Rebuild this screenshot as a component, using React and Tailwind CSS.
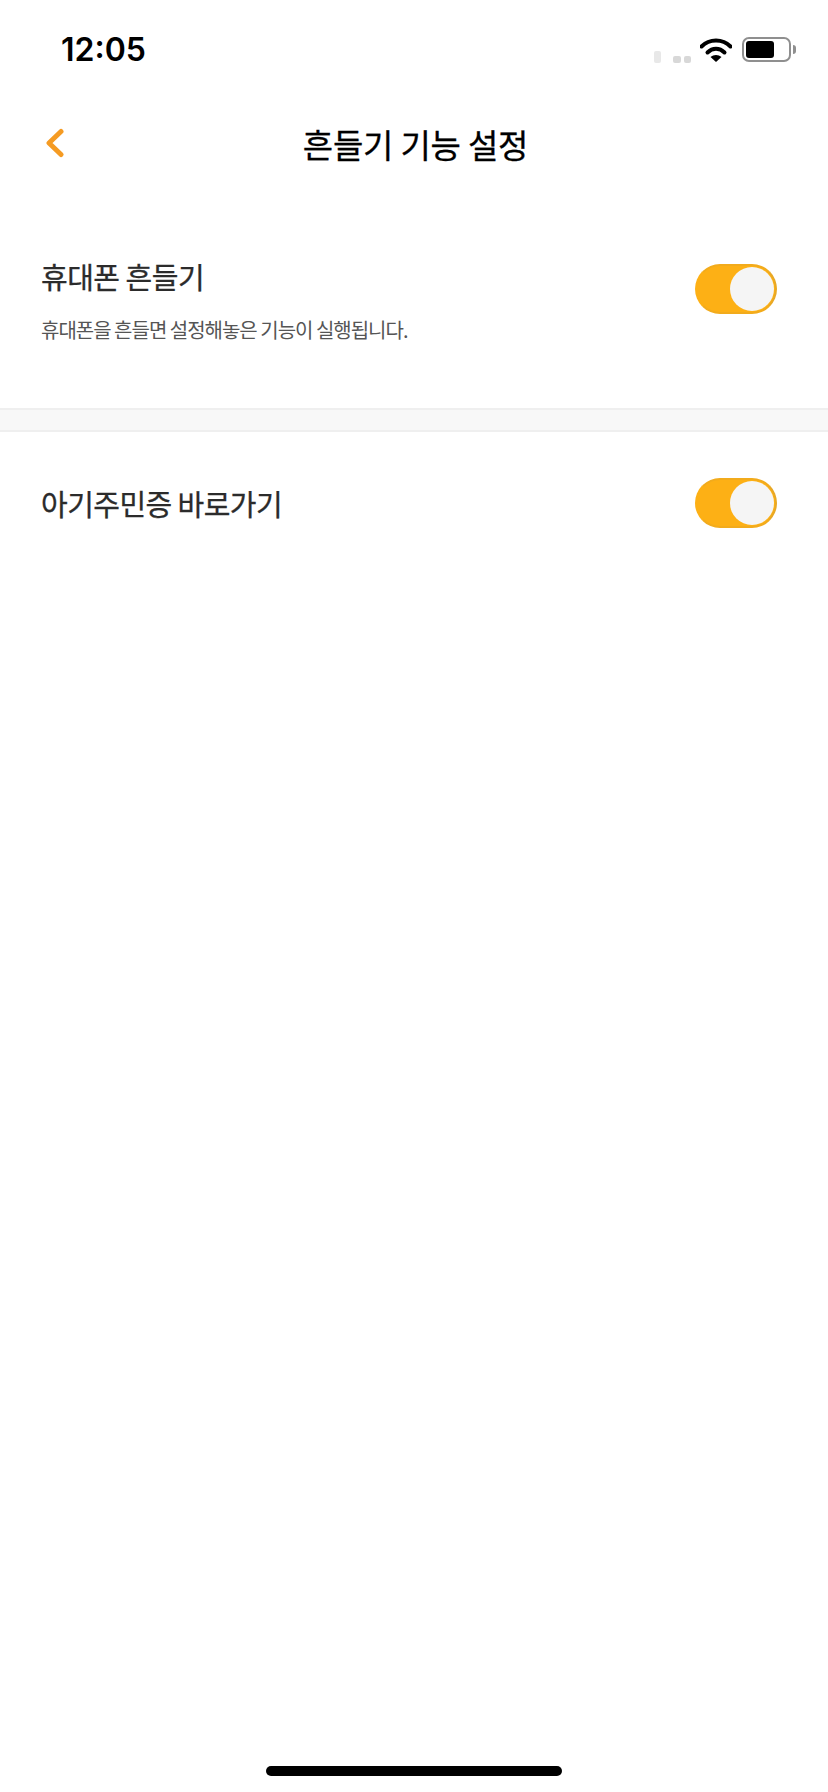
import React from 'react'

const sans = 'font-["Noto_Sans_CJK_KR","Noto_Sans",sans-serif]'

function Toggle() {
  return (
    <div className="flex h-[50px] w-[82px] items-center justify-end rounded-full border-2 border-[#fdb015] border-r-[#e8a825] border-t-[#f2ab1c] border-b-[#f2ab1c] bg-[#fdb015] pr-[1px]">
      <div className="h-[44px] w-[44px] rounded-full bg-[#f5f5f5]" />
    </div>
  )
}

function StatusBar() {
  return (
    <div className="flex h-[96px] items-start justify-between pl-[61px] pr-[32px]">
      <span className='mt-[30px] font-["Inter",sans-serif] text-[32px] leading-[40px] font-semibold text-black'>12:05</span>
      <div className="mt-[36px] flex items-center">
        <div className="mt-[15px] h-[12px] w-[7px] rounded-[2px] bg-[#e8e8e8]" />
        <div className="mt-[19px] ml-[12px] h-[7px] w-[8px] rounded-[2px] bg-[#d8d8d8]" />
        <div className="mt-[19px] ml-[3px] h-[7px] w-[7px] rounded-[2px] bg-[#d8d8d8]" />
        <svg className="ml-[9px]" width="32" height="26" viewBox="0 0 32 26">
          <path d="M1.5 9.5C9.5 1.5 22.5 1.5 30.5 9.5" fill="none" stroke="#000" strokeWidth="4" strokeLinecap="round" />
          <path d="M7.5 15.5C12.5 10.5 19.5 10.5 24.5 15.5" fill="none" stroke="#000" strokeWidth="4" strokeLinecap="round" />
          <path d="M16 25L10.5 20C13.5 17.2 18.5 17.2 21.5 20Z" fill="#000" />
        </svg>
        <div className="ml-[10px] flex h-[25px] w-[49px] items-center rounded-[7px] border-2 border-[#8f8f8f] pl-[2px]">
          <div className="h-[17px] w-[28px] rounded-[3px] bg-black" />
        </div>
        <div className="ml-[2px] h-[9px] w-[3px] rounded-r-full bg-[#8f8f8f]" />
      </div>
    </div>
  )
}

export default function App() {
  return (
    <div className={`relative flex h-[1792px] w-[828px] flex-col bg-white ${sans}`}>
      <StatusBar />

      <header className="relative mt-[18px] flex h-[60px] items-center justify-center">
        <svg className="absolute left-[44px] top-[14px]" width="22" height="30" viewBox="0 0 22 30">
          <path d="M17 3.5L5 15L17 26.5" fill="none" stroke="#f59b23" strokeWidth="5" strokeLinecap="round" strokeLinejoin="round" />
        </svg>
        <h1 className="pl-[3px] text-[33px] leading-[44px] font-normal tracking-[-0.2px] text-black [-webkit-text-stroke:0.3px_#000]">흔들기 기능 설정</h1>
      </header>

      <section className="flex h-[234px] items-start justify-between pl-[41px] pr-[51px] pt-[82px]">
        <div>
          <div className="text-[29px] leading-[40px] font-normal tracking-[-0.5px] text-[#2b2b2b] [-webkit-text-stroke:0.3px_#2b2b2b]">휴대폰 흔들기</div>
          <div className="mt-[19px] text-[20px] leading-[30px] font-normal tracking-[-1px] text-[#555555]">휴대폰을 흔들면 설정해놓은 기능이 실행됩니다.</div>
        </div>
        <div className="mt-[8px]"><Toggle /></div>
      </section>

      <div className="h-[24px] border-y-2 border-[#efefef] bg-[#f8f8f8]" />

      <section className="flex items-center justify-between pl-[41px] pr-[51px] pt-[46px]">
        <div className="text-[29px] leading-[48px] font-normal tracking-[-0.55px] text-[#2b2b2b] [-webkit-text-stroke:0.3px_#2b2b2b]">아기주민증 바로가기</div>
        <Toggle />
      </section>

      <div className="absolute bottom-[16px] left-[266px] h-[10px] w-[296px] rounded-full bg-black" />
    </div>
  )
}
